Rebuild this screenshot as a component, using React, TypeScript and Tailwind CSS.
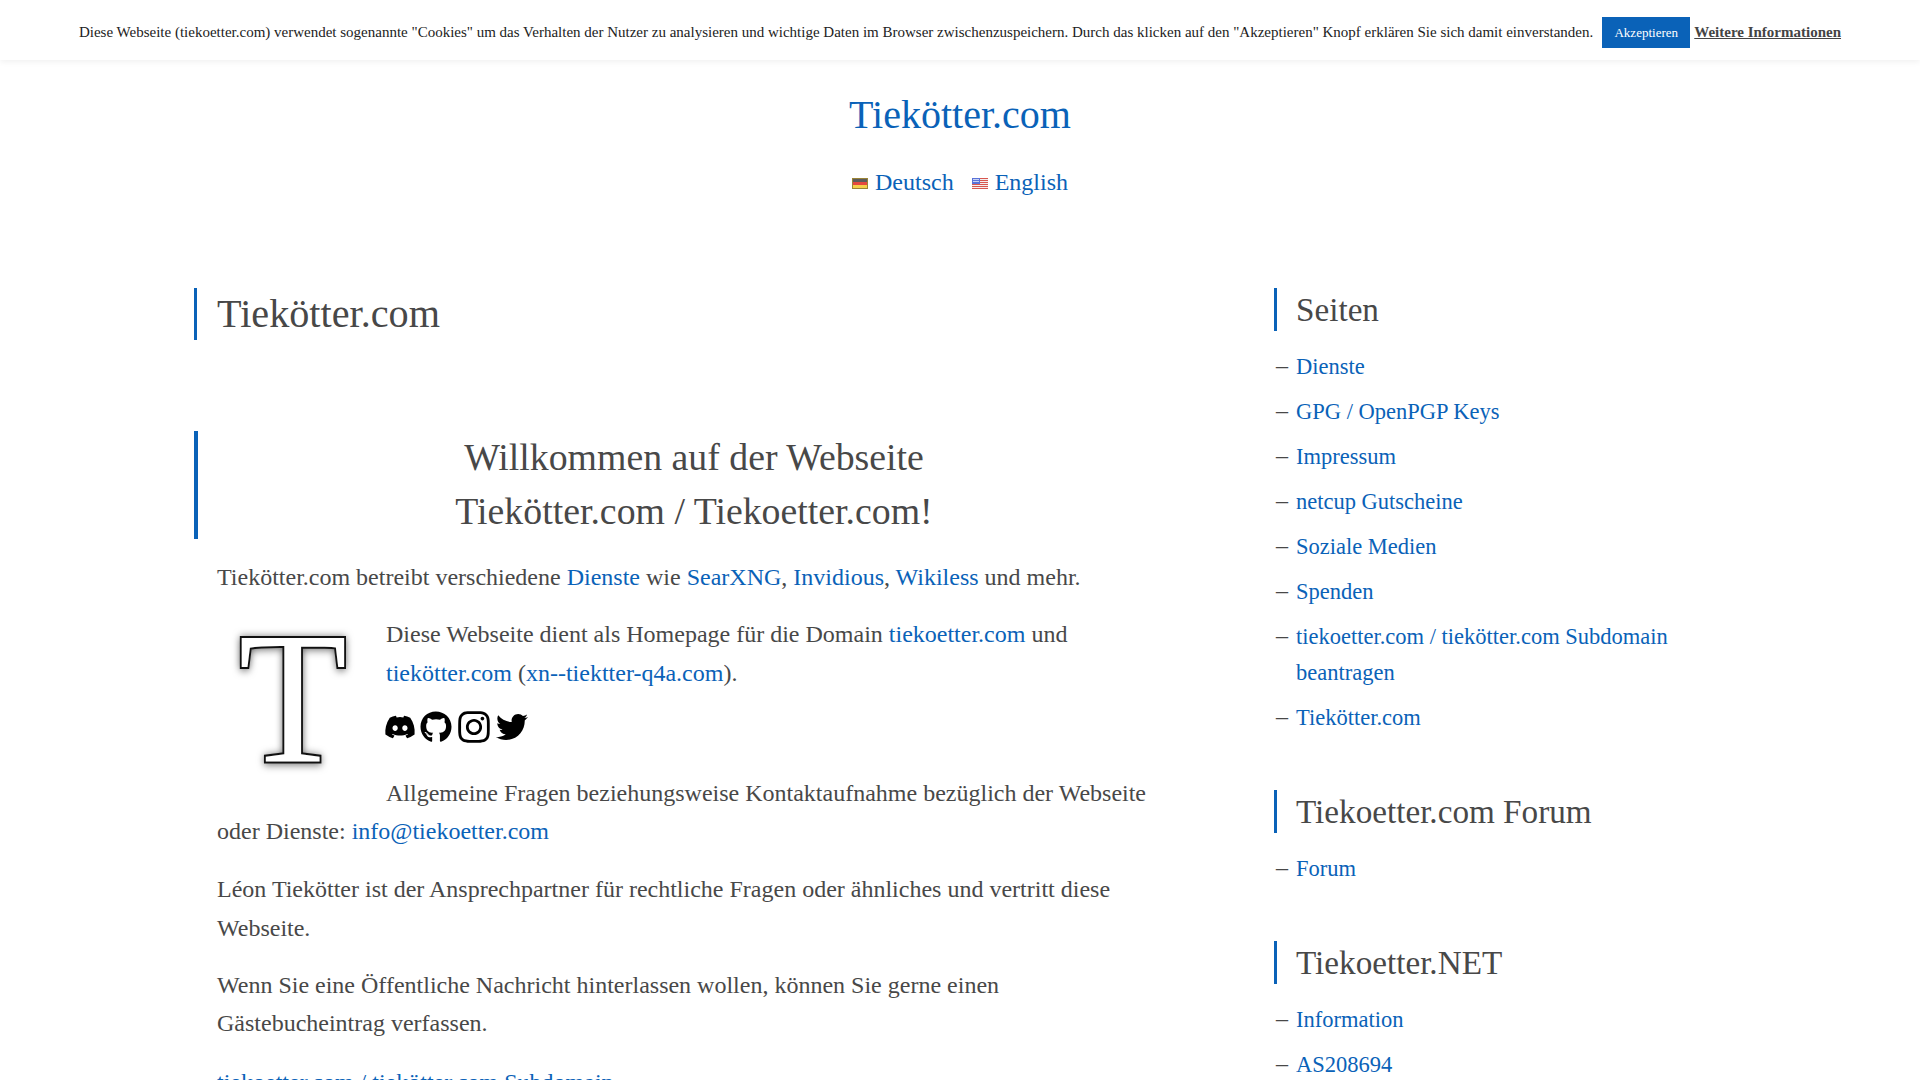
import { FaDiscord, FaGithub, FaInstagram, FaTwitter } from "react-icons/fa";

const link = "text-[#0a62b8]";

const sections = [
  {
    title: "Seiten",
    items: [
      "Dienste",
      "GPG / OpenPGP Keys",
      "Impressum",
      "netcup Gutscheine",
      "Soziale Medien",
      "Spenden",
      "tiekoetter.com / tiekötter.com Subdomain beantragen",
      "Tiekötter.com",
    ],
  },
  { title: "Tiekoetter.com Forum", items: ["Forum"] },
  { title: "Tiekoetter.NET", items: ["Information", "AS208694", "Looking Glass"] },
];

function FlagDe() {
  return (
    <svg width="16" height="11" viewBox="0 0 16 11" className="inline-block translate-y-[1px]">
      <rect width="16" height="11" fill="#9a8436" />
      <rect x="1" y="1" width="14" height="3" fill="#5c5c5c" />
      <rect x="1" y="4" width="14" height="3" fill="#e4483f" />
      <rect x="1" y="7" width="14" height="3" fill="#f5cf4a" />
    </svg>
  );
}

function FlagUs() {
  return (
    <svg width="16" height="11" viewBox="0 0 16 11" className="inline-block translate-y-[1px]">
      <rect width="16" height="11" fill="#f4eeee" />
      {[0, 2, 4, 6, 8, 10].map((y) => (
        <rect key={y} y={y} width="16" height="1" fill="#d8574f" />
      ))}
      <rect width="8" height="6" fill="#5a72d8" />
      <rect x="1" y="1" width="6" height="1" fill="#c8d2f4" />
      <rect x="1" y="3" width="6" height="1" fill="#c8d2f4" />
    </svg>
  );
}

function CookieBar() {
  return (
    <div className="flex h-[60px] items-center justify-center bg-white pt-[5px] text-[15px] text-[#222] shadow-[0_2px_6px_rgba(0,0,0,0.06)]">
      <span>
        Diese Webseite (tiekoetter.com) verwendet sogenannte "Cookies" um das Verhalten der Nutzer zu analysieren und
        wichtige Daten im Browser zwischenzuspeichern. Durch das klicken auf den "Akzeptieren" Knopf erklären Sie sich
        damit einverstanden.
      </span>
      <button className="mr-1 ml-[9px] h-[31px] w-[88px] bg-[#0a62b8] text-[13px] text-white">Akzeptieren</button>
      <a className="font-bold text-[#444] underline">Weitere Informationen</a>
    </div>
  );
}

function Sidebar() {
  return (
    <aside className="w-[490px] shrink-0">
      {sections.map((s) => (
        <section key={s.title} className="mb-[54px]">
          <h3 className="border-l-[3px] border-[#0a62b8] pl-[19px] text-[33.2px] leading-[43px] text-[#484848]">
            {s.title}
          </h3>
          <ul className="mt-[18px] flex flex-col gap-[9px] text-[22.5px] leading-[36px]">
            {s.items.map((item) => (
              <li key={item} className="flex">
                <span className="w-[22px] shrink-0 pl-[2px] text-[24px] leading-[33px] text-[#484848]">–</span>
                <a className={`${link} max-w-[430px]`}>{item}</a>
              </li>
            ))}
          </ul>
        </section>
      ))}
    </aside>
  );
}

function Main() {
  return (
    <main className="w-[977px] shrink-0 text-[24px] leading-[38.4px] text-[#484848]">
      <h1 className="border-l-[3px] border-[#0a62b8] pl-[20px] text-[40.2px] leading-[52px]">Tiekötter.com</h1>
      <h2 className="mt-[91px] flow-root h-[108px] border-l-[4px] border-[#0a62b8] pl-[19px] text-center text-[37.8px] leading-[54px]">
        <div className="-mt-px">
          Willkommen auf der Webseite
          <br />
          Tiekötter.com / Tiekoetter.com!
        </div>
      </h2>
      <div className="pl-[23px]">
        <p className="mt-[19px]">
          Tiekötter.com betreibt verschiedene <a className={link}>Dienste</a> wie <a className={link}>SearXNG</a>,{" "}
          <a className={link}>Invidious</a>, <a className={link}>Wikiless</a> und mehr.
        </p>
        <div className="float-left mt-[19px] mr-[23px] flex h-[170px] w-[146px] items-center justify-center overflow-hidden">
          <span className="translate-x-[3px] -translate-y-[2px] scale-x-[0.94] text-[189px] leading-none text-white [-webkit-text-stroke:4px_#111] [paint-order:stroke_fill] drop-shadow-[0_1px_4px_rgba(0,0,0,0.6)]">
            T
          </span>
        </div>
        <p className="mt-[19px]">
          Diese Webseite dient als Homepage für die Domain <a className={link}>tiekoetter.com</a> und{" "}
          <a className={link}>tiekötter.com</a> (<a className={link}>xn--tiektter-q4a.com</a>).
        </p>
        <div className="mt-[17px] flex items-center gap-[6px] text-black">
          <FaDiscord className="-mx-[2px] h-[32px] w-[32px]" />
          <FaGithub className="h-[32px] w-[32px]" />
          <FaInstagram className="h-[36px] w-[32px]" />
          <FaTwitter className="h-[32px] w-[32px]" />
        </div>
        <p className="mt-[29px] leading-[38px]">
          Allgemeine Fragen beziehungsweise Kontaktaufnahme bezüglich der Webseite oder Dienste:{" "}
          <a className={link}>info@tiekoetter.com</a>
        </p>
        <p className="mt-[20px]">
          Léon Tiekötter ist der Ansprechpartner für rechtliche Fragen oder ähnliches und vertritt diese Webseite.
        </p>
        <p className="mt-[19px]">
          Wenn Sie eine Öffentliche Nachricht hinterlassen wollen, können Sie gerne einen Gästebucheintrag verfassen.
        </p>
        <p className="mt-[20px]">
          <a className={link}>tiekoetter.com / tiekötter.com Subdomain</a>
        </p>
      </div>
    </main>
  );
}

export default function App() {
  return (
    <div className="h-screen overflow-hidden bg-white font-['Liberation_Serif',serif]">
      <CookieBar />
      <header className="pt-[30px] text-center">
        <a className={`${link} text-[40px] leading-[50px]`}>Tiekötter.com</a>
        <nav className="mt-[24px] flex items-center justify-center gap-[18px] text-[24px] leading-[36px]">
          <a className={`${link} flex items-center gap-[7px]`}>
            <FlagDe /> Deutsch
          </a>
          <a className={`${link} flex items-center gap-[7px]`}>
            <FlagUs /> English
          </a>
        </nav>
      </header>
      <div className="mt-[88px] flex gap-[103px] pl-[194px]">
        <Main />
        <Sidebar />
      </div>
    </div>
  );
}
